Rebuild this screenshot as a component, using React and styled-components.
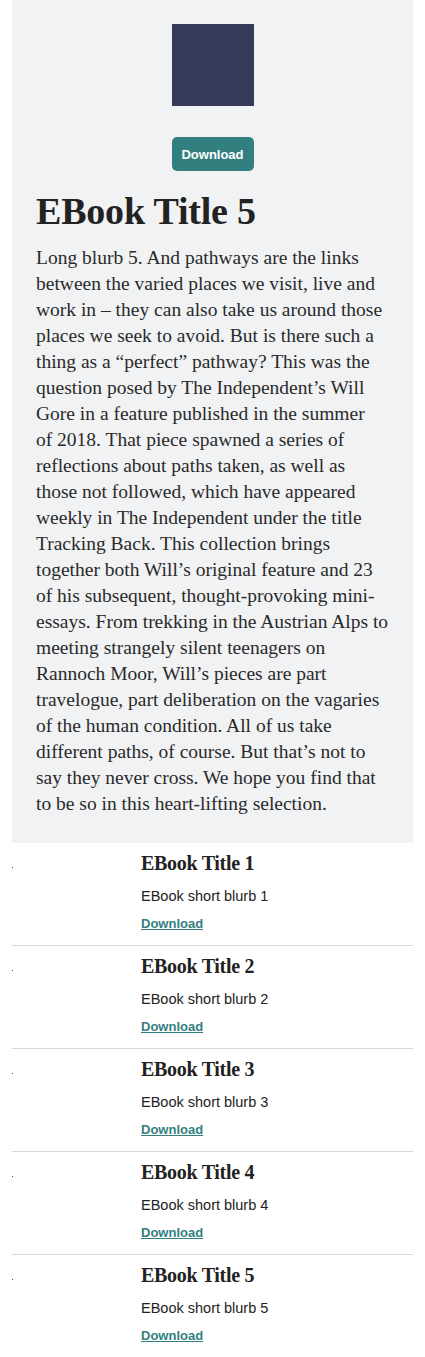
import styled, { createGlobalStyle } from 'styled-components'

const books = [1, 2, 3, 4, 5].map((n) => ({
    key: n,
    title: `EBook Title ${n}`,
    blurb: `EBook short blurb ${n}`,
}))

// "of 2018" kept together so the line breaks like the original
const longBlurb = 'Long blurb 5. And pathways are the links between the varied places we visit, live and work in – they can also take us around those places we seek to avoid. But is there such a thing as a “perfect” pathway? This was the question posed by The Independent’s Will Gore in a feature published in the summer of\u00a02018. That piece spawned a series of reflections about paths taken, as well as those not followed, which have appeared weekly in The Independent under the title Tracking Back. This collection brings together both Will’s original feature and 23 of his subsequent, thought-provoking mini-essays. From trekking in the Austrian Alps to meeting strangely silent teenagers on Rannoch Moor, Will’s pieces are part travelogue, part deliberation on the vagaries of the human condition. All of us take different paths, of course. But that’s not to say they never cross. We hope you find that to be so in this heart-lifting selection.'

const App = () => {
    return (
        <>
            <GlobalStyle />
            <StyledPage>
                <Featured>
                    <Cover />
                    <Button>Download</Button>
                    <FeaturedTitle>EBook Title 5</FeaturedTitle>
                    <LongBlurb>{longBlurb}</LongBlurb>
                </Featured>
                <BookList>
                    {books.map((book) => (
                        <BookItem key={book.key}>
                            <Thumb />
                            <div>
                                <ItemTitle>{book.title}</ItemTitle>
                                <ShortBlurb>{book.blurb}</ShortBlurb>
                                <DownloadLink href="#">Download</DownloadLink>
                            </div>
                        </BookItem>
                    ))}
                </BookList>
            </StyledPage>
        </>
    )
}

const GlobalStyle = createGlobalStyle`
    body{
        margin: 0;
        background: #fff;
        font-family: "Liberation Sans", Arial, sans-serif;
        color: #222;
    }
`

const StyledPage = styled.main`
    padding: 0 12px;
`

const Featured = styled.section`
    background: #f1f2f4;
    padding: 24px 24px 26px;
    display: flex;
    flex-direction: column;
    align-items: center;
`

const Cover = styled.div`
    width: 82px;
    height: 82px;
    background: #373b59;
`

const Button = styled.button`
    margin-top: 31px;
    width: 82px;
    height: 34px;
    border: none;
    border-radius: 5px;
    background: #337f80;
    color: #fff;
    font-family: "Liberation Sans", Arial, sans-serif;
    font-weight: bold;
    font-size: 13px;
    cursor: pointer;
`

const FeaturedTitle = styled.h1`
    align-self: stretch;
    margin: 18px 0 0;
    font-family: "Liberation Serif", "Times New Roman", serif;
    font-size: 38px;
    line-height: 44px;
    letter-spacing: -0.2px;
    color: #222;
`

const LongBlurb = styled.p`
    margin: 12px 0 0;
    font-family: "Liberation Serif", "Times New Roman", serif;
    font-size: 19.5px;
    line-height: 26px;
    color: #2a2a2a;
`

const BookList = styled.ul`
    margin: 0;
    padding: 0;
    list-style: none;
`

const BookItem = styled.li`
    display: grid;
    grid-template-columns: 129px 1fr;
    padding: 7px 0 10px;
    height: 103px;
    box-sizing: border-box;

    &:not(:last-child){
        border-bottom: 1px solid #d9d9d9;
    }
`

const Thumb = styled.span`
    width: 1px;
    height: 1px;
    margin-top: 17px;
    background: #555;
`

const ItemTitle = styled.h2`
    margin: 0;
    font-family: "Liberation Serif", "Times New Roman", serif;
    font-size: 20px;
    line-height: 26px;
    letter-spacing: -0.3px;
    color: #222;
`

const ShortBlurb = styled.p`
    margin: 10px 0 0;
    font-size: 14.5px;
    line-height: 20px;
    color: #222;
`

const DownloadLink = styled.a`
    display: inline-block;
    margin-top: 10px;
    font-size: 13px;
    font-weight: bold;
    color: #337f80;
    text-decoration: underline;
`

export default App
